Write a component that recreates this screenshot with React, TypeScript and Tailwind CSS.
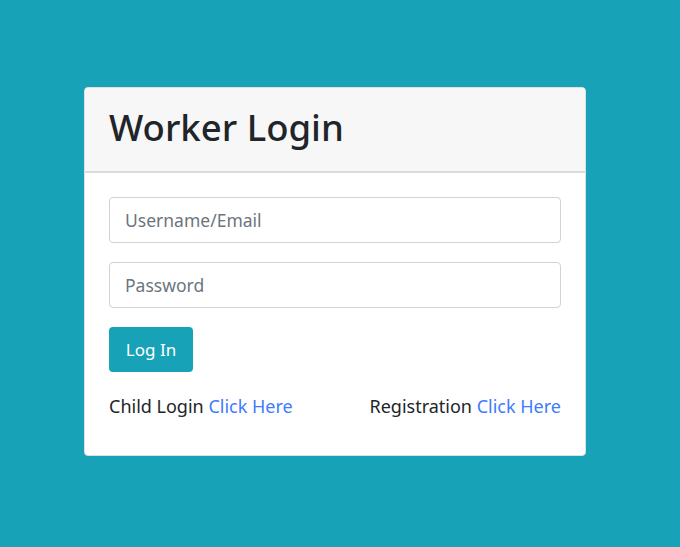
export default function App() {
  return (
    <div className="min-h-[547px] w-full bg-[#17a2b8] pt-[87px] pl-[84px]" style={{ fontFamily: '"Noto Sans", "Open Sans", sans-serif' }}>
      <div className="w-[502px] rounded-[4px] border border-[#dfdfdf] bg-white">
        <div className="h-[85px] rounded-t-[4px] border-b-2 border-[#dcdcdc] bg-[#f7f7f7] px-[24px] flex items-center">
          <h1 className="text-[36.5px] font-medium leading-none text-[#212529] -mt-[4px]">Worker Login</h1>
        </div>
        <div className="px-[24px] pt-[24px] pb-[37px]">
          <input
            className="block h-[46px] w-full rounded-[4px] border border-[#ced4da] px-[15px] text-[17.5px] text-[#495057] placeholder:text-[#6c757d] outline-none"
            placeholder="Username/Email"
          />
          <input
            type="password"
            className="mt-[19px] block h-[46px] w-full rounded-[4px] border border-[#ced4da] px-[15px] text-[17.5px] text-[#495057] placeholder:text-[#6c757d] outline-none"
            placeholder="Password"
          />
          <button className="mt-[19px] h-[45px] w-[84px] rounded-[4px] bg-[#17a2b8] text-[17px] text-white">Log In</button>
          <div className="mt-[22px] flex justify-between text-[18px] leading-[24px] text-[#212529]">
            <p>
              Child Login <a className="text-[#3d7bff]" href="#">Click Here</a>
            </p>
            <p>
              Registration <a className="text-[#3d7bff]" href="#">Click Here</a>
            </p>
          </div>
        </div>
      </div>
    </div>
  );
}
